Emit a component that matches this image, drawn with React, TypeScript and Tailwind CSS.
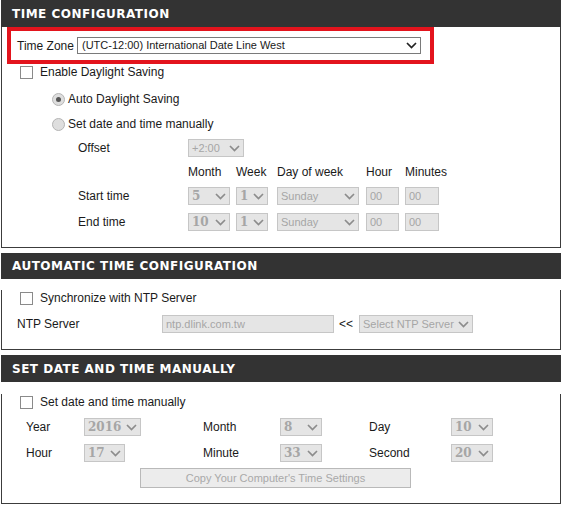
import React from 'react';

const Chevron = ({ color }: { color: string }) => (
  <svg width="11" height="7" viewBox="0 0 11 7" className="shrink-0">
    <path d="M1 1l4.5 4.5L10 1" fill="none" stroke={color} strokeWidth="1.7" />
  </svg>
);

type SelectProps = { value: string; width: string; serif?: boolean };

const DisabledSelect = ({ value, width, serif }: SelectProps) => (
  <div
    className={`${width} h-[18px] flex items-center justify-between pl-[3px] pr-[3px] border border-[#c6c6c6] bg-[#e5e5e5] text-[#a6a6a6] ${
      serif ? "font-['DejaVu_Serif',serif] font-bold text-[12px]" : 'text-[11px]'
    }`}
  >
    <span className="whitespace-nowrap">{value}</span>
    <Chevron color="#8c8c8c" />
  </div>
);

const DisabledInput = ({ value, width }: { value: string; width: string }) => (
  <div className={`${width} h-[18px] flex items-center pl-[3px] border border-[#c6c6c6] bg-[#e5e5e5] text-[#a6a6a6] text-[11px]`}>
    {value}
  </div>
);

const Checkbox = () => <span className="w-[13px] h-[13px] border border-[#8a8a8a] bg-white shrink-0" />;

const Radio = ({ checked }: { checked?: boolean }) => (
  <span className="w-[13px] h-[13px] rounded-full border border-[#b4b4b4] bg-[#dedede] flex items-center justify-center shrink-0">
    {checked && <span className="w-[5px] h-[5px] rounded-full bg-[#555]" />}
  </span>
);

const Header = ({ title, h }: { title: string; h: string }) => (
  <div className={`${h} bg-[#333333] flex items-center pl-[11px] text-white font-['DejaVu_Sans',sans-serif] font-bold text-[12px] tracking-[0.5px]`}>
    {title}
  </div>
);

const App: React.FC = () => {
  return (
    <div className="ml-[1px] w-[560px] bg-white font-['Liberation_Sans',Arial,sans-serif] text-[12px] text-[#1a1a1a] leading-none whitespace-nowrap">
      {/* time configuration */}
      <Header title="TIME CONFIGURATION" h="h-[27px]" />
      <div className="border border-t-0 border-[#3c3c3c] pb-[16px]">
        <div className="ml-[5px] w-[427px] h-[37px] border-4 border-[#e3141d] flex items-center pl-[6px]">
          <span className="w-[60px]">Time Zone</span>
          <div className="w-[344px] h-[17px] border border-[#7a7a7a] bg-white flex items-center justify-between pl-[4px] pr-[3px] text-[11px]">
            <span>(UTC-12:00) International Date Line West</span>
            <Chevron color="#222" />
          </div>
        </div>
        <div className="h-[16px] flex items-center ml-[18px] gap-[7px]">
          <Checkbox />
          <span>Enable Daylight Saving</span>
        </div>
        <div className="mt-[11px] h-[16px] flex items-center ml-[50px] gap-[3px]">
          <Radio checked />
          <span>Auto Daylight Saving</span>
        </div>
        <div className="mt-[9px] h-[16px] flex items-center ml-[50px] gap-[3px]">
          <Radio />
          <span>Set date and time manually</span>
        </div>
        <div className="mt-[7px] h-[18px] flex items-center pl-[76px]">
          <span className="w-[110px]">Offset</span>
          <DisabledSelect value="+2:00" width="w-[56px]" />
        </div>
        <div className="mt-[7px] h-[16px] flex items-center pl-[186px]">
          <span className="w-[48px]">Month</span>
          <span className="w-[41px]">Week</span>
          <span className="w-[89px]">Day of week</span>
          <span className="w-[39px]">Hour</span>
          <span>Minutes</span>
        </div>
        {[
          { label: 'Start time', month: '5', mt: 'mt-[7px]' },
          { label: 'End time', month: '10', mt: 'mt-[8px]' },
        ].map((r) => (
          <div key={r.label} className={`${r.mt} h-[18px] flex items-center pl-[76px]`}>
            <span className="w-[110px]">{r.label}</span>
            <div className="w-[48px]">
              <DisabledSelect value={r.month} width="w-[42px]" serif />
            </div>
            <div className="w-[41px]">
              <DisabledSelect value="1" width="w-[32px]" serif />
            </div>
            <div className="w-[89px]">
              <DisabledSelect value="Sunday" width="w-[82px]" />
            </div>
            <div className="w-[39px]">
              <DisabledInput value="00" width="w-[33px]" />
            </div>
            <DisabledInput value="00" width="w-[34px]" />
          </div>
        ))}
      </div>

      {/* automatic */}
      <div className="mt-[5px]">
        <Header title="AUTOMATIC TIME CONFIGURATION" h="h-[26px]" />
      </div>
      <div className="border border-t-0 border-[#3c3c3c] pb-[16px]">
        <div className="mt-[11px] h-[16px] flex items-center ml-[18px] gap-[7px]">
          <Checkbox />
          <span>Synchronize with NTP Server</span>
        </div>
        <div className="mt-[9px] h-[18px] flex items-center pl-[15px]">
          <span className="w-[145px]">NTP Server</span>
          <DisabledInput value="ntp.dlink.com.tw" width="w-[172px]" />
          <span className="ml-[5px] w-[20px]">&lt;&lt;</span>
          <DisabledSelect value="Select NTP Server" width="w-[114px]" />
        </div>
      </div>

      {/* manual */}
      <div className="mt-[5px]">
        <Header title="SET DATE AND TIME MANUALLY" h="h-[27px]" />
      </div>
      <div className="border border-t-0 border-[#3c3c3c] pb-[15px]">
        <div className="mt-[12px] h-[16px] flex items-center ml-[18px] gap-[7px]">
          <Checkbox />
          <span>Set date and time manually</span>
        </div>
        {[
          { a: ['Year', '2016', 'w-[57px]'], b: ['Month', '8'], c: ['Day', '10'], mt: 'mt-[8px]' },
          { a: ['Hour', '17', 'w-[41px]'], b: ['Minute', '33'], c: ['Second', '20'], mt: 'mt-[8px]' },
        ].map((r) => (
          <div key={r.a[0]} className={`${r.mt} h-[18px] flex items-center pl-[24px]`}>
            <span className="w-[58px]">{r.a[0]}</span>
            <div className="w-[119px]">
              <DisabledSelect value={r.a[1]} width={r.a[2]} serif />
            </div>
            <span className="w-[77px]">{r.b[0]}</span>
            <div className="w-[89px]">
              <DisabledSelect value={r.b[1]} width="w-[42px]" serif />
            </div>
            <span className="w-[82px]">{r.c[0]}</span>
            <DisabledSelect value={r.c[1]} width="w-[42px]" serif />
          </div>
        ))}
        <div className="mt-[6px] ml-[138px] w-[271px] h-[20px] border border-[#b9b9b9] bg-[#ececec] text-[#a9a9a9] text-[11px] flex items-center justify-center">
          Copy Your Computer's Time Settings
        </div>
      </div>
    </div>
  );
};

export default App;
